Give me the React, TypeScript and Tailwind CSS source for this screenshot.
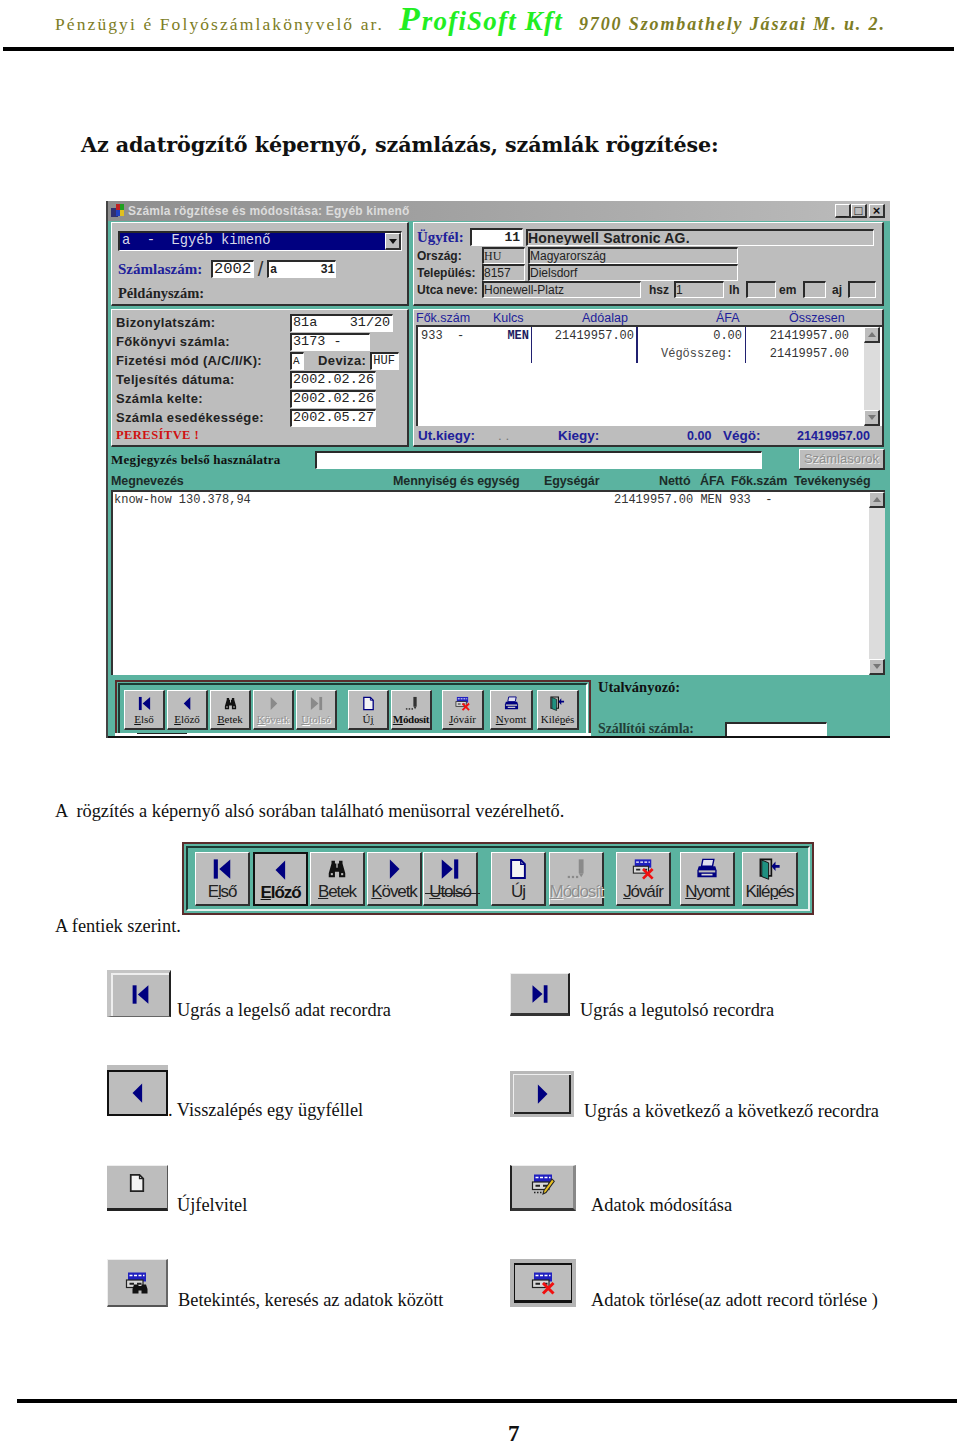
import React from 'react';

const serif = "font-['Liberation_Serif',serif]";
const sans = "font-['Liberation_Sans',sans-serif]";
const mono = "font-['Liberation_Mono',monospace]";

const raised = 'border-t border-l border-t-white border-l-white border-b-2 border-r-2 border-b-[#303030] border-r-[#303030]';
const sunken = 'border-t-2 border-l-2 border-t-[#2a2a2a] border-l-[#2a2a2a] border-b border-r border-b-white border-r-white';

/* ---- icons ---- */
const IconFirst = ({ className = '', color = '#000080' }: { className?: string; color?: string }) => (
  <svg viewBox="0 0 16 16" className={className}>
    <rect x="2" y="1" width="3" height="14" fill={color} />
    <path d="M14 1v14L6 8z" fill={color} />
  </svg>
);
const IconLast = ({ className = '', color = '#000080' }: { className?: string; color?: string }) => (
  <svg viewBox="0 0 16 16" className={className}>
    <path d="M2 1v14l8-7z" fill={color} />
    <rect x="11" y="1" width="3" height="14" fill={color} />
  </svg>
);
const IconPrev = ({ className = '', color = '#000080' }: { className?: string; color?: string }) => (
  <svg viewBox="0 0 16 16" className={className}>
    <path d="M11 1v14L4 8z" fill={color} />
  </svg>
);
const IconNext = ({ className = '', color = '#000080' }: { className?: string; color?: string }) => (
  <svg viewBox="0 0 16 16" className={className}>
    <path d="M5 1v14l7-7z" fill={color} />
  </svg>
);
const IconPage = ({ className = '', color = '#000080' }: { className?: string; color?: string }) => (
  <svg viewBox="0 0 16 16" className={className}>
    <path d="M3 1.5h7l3 3v10H3z" fill="#f4f4f4" stroke={color} strokeWidth="1.4" />
    <path d="M10 1.5v3h3" fill="none" stroke={color} strokeWidth="1" />
  </svg>
);
const IconBinoculars = ({ className = '' }: { className?: string }) => (
  <svg viewBox="0 0 16 16" className={className}>
    <path d="M4 2h2.500v2h1v3h1V4h1V2H12v2l2 7v3H9.500v-4h-3v4H2v-3l2-7z" fill="#111" />
    <rect x="3.500" y="11" width="1.500" height="1.500" fill="#bdbdbd" />
    <rect x="11" y="11" width="1.500" height="1.500" fill="#bdbdbd" />
  </svg>
);
const IconModify = ({ className = '', color = '#444' }: { className?: string; color?: string }) => (
  <svg viewBox="0 0 16 16" className={className}>
    <rect x="10" y="1" width="3.500" height="10" fill={color} />
    <path d="M10 11h3.500l-1.700 3z" fill={color} />
    <rect x="2" y="13" width="1.600" height="1.600" fill={color} />
    <rect x="5" y="13" width="1.600" height="1.600" fill={color} />
    <rect x="8" y="13" width="1.600" height="1.600" fill={color} />
  </svg>
);
const Grid = () => (
  <>
    <rect x="2" y="1" width="12" height="6" fill="#2020c0" />
    <path d="M3 3h2M6 3h2M9 3h2M12 3h1" stroke="#fff" strokeWidth="1" />
    <rect x="1" y="6" width="11" height="5" fill="#d8d8d8" stroke="#222" strokeWidth="0.8" />
    <path d="M3 8.500h3M8 8.500h3" stroke="#222" strokeWidth="1.200" />
  </>
);
const IconGridX = ({ className = '' }: { className?: string }) => (
  <svg viewBox="0 0 16 16" className={className}>
    <Grid />
    <path d="M8 8l7 7M15 8l-7 7" stroke="#f01010" strokeWidth="2" />
  </svg>
);
const IconGridPen = ({ className = '' }: { className?: string }) => (
  <svg viewBox="0 0 16 16" className={className}>
    <Grid />
    <path d="M14 4l1.500 1.500L10 13l-2 1 .6-2.300z" fill="#e8c020" stroke="#222" strokeWidth="0.7" />
    <path d="M2 13h1M4 13h1M6 13h1" stroke="#222" strokeWidth="0.9" />
  </svg>
);
const IconGridFind = ({ className = '' }: { className?: string }) => (
  <svg viewBox="0 0 16 16" className={className}>
    <Grid />
    <path d="M6 9h3v1h2V9h3l1 3v3h-4v-2H9v2H5v-3z" fill="#111" />
  </svg>
);
const IconPrint = ({ className = '' }: { className?: string }) => (
  <svg viewBox="0 0 16 16" className={className}>
    <path d="M5 1h8l-1 5H4z" fill="#e0e0f0" stroke="#000080" strokeWidth="1" />
    <path d="M2 6h12l1 3v5H1V9z" fill="#000080" />
    <rect x="2" y="9" width="12" height="1.500" fill="#bdbdbd" />
    <rect x="4" y="11.500" width="8" height="1.200" fill="#d8d8d8" />
  </svg>
);
const IconExit = ({ className = '' }: { className?: string }) => (
  <svg viewBox="0 0 16 16" className={className}>
    <path d="M1 1h8v12H1z" fill="none" stroke="#111" strokeWidth="1.200" />
    <path d="M2 1.500l5 2v12l-5-2z" fill="#1f9080" stroke="#111" strokeWidth="0.7" />
    <path d="M15 5H12V2.500L9 6l3 3.500V7h3z" fill="#000080" />
  </svg>
);

/* ---- main toolbar ---- */
type Tool = { icon: React.ReactNode; label: string; hot: number; off?: boolean; active?: boolean };

const Label = ({ text, hot }: { text: string; hot: number }) => (
  <>
    {text.slice(0, hot)}
    <span className="underline">{text[hot]}</span>
    {text.slice(hot + 1)}
  </>
);

const tools = (big: boolean): Tool[] => {
  const s = big ? 'w-[22px] h-[22px]' : 'w-[15px] h-[15px]';
  return [
    { icon: <IconFirst className={s} />, label: 'Első', hot: big ? 1 : 0 },
    { icon: <IconPrev className={s} />, label: 'Előző', hot: 0, active: big },
    { icon: <IconBinoculars className={s} />, label: 'Betek', hot: 0 },
    { icon: <IconNext className={s} color={big ? '#000080' : '#8a8a8a'} />, label: 'Követk', hot: 0, off: true },
    { icon: <IconLast className={s} color={big ? '#000080' : '#8a8a8a'} />, label: 'Utolsó', hot: 0, off: true },
    { icon: <IconPage className={s} />, label: 'Új', hot: 1 },
    { icon: <IconModify className={s} color={big ? '#8a8a8a' : '#333'} />, label: 'Módosít', hot: 0, off: big },
    { icon: <IconGridX className={s} />, label: 'Jóváír', hot: 0 },
    { icon: <IconPrint className={s} />, label: 'Nyomt', hot: 0 },
    { icon: <IconExit className={s} />, label: 'Kilépés', hot: 4 },
  ];
};

const smallExtra: Record<string, string> = {
  'Új': 'w-[41px] ml-[9px]',
  'Jóváír': 'w-[42px] ml-[8px]',
  Nyomt: 'w-[43px] ml-[4px]',
  'Kilépés': 'w-[42px] ml-[2px]',
};

const SmallButtons = () => (
  <div className="flex">
    {tools(false).map((t) => (
      <div
        key={t.label}
        className={`h-[40px] mr-[2px] bg-[#bdbdbd] flex flex-col items-center pt-[5px] ${raised} ${smallExtra[t.label] ?? 'w-[41px]'}`}
      >
        {t.icon}
        <span className={`${serif} text-[11px] leading-[13px] mt-[2px] whitespace-nowrap ${t.off ? 'text-[#909090] [text-shadow:1px_1px_0_#fff]' : 'text-[#111]'} ${t.label === 'Módosít' ? 'text-[9.500px] font-bold tracking-[-0.3px]' : ''}`}>
          <Label text={t.label} hot={t.hot} />
        </span>
      </div>
    ))}
  </div>
);

const bigGaps: Record<string, string> = {
  'Első': 'mr-[3px]',
  'Előző': 'mr-[2px]',
  Betek: 'mr-[2px]',
  'Követk': 'mr-[1px]',
  Utolsó: 'mr-[13px]',
  'Új': 'mr-[3px]',
  'Módosít': 'mr-[12px]',
  'Jóváír': 'mr-[9px]',
  Nyomt: 'mr-[7px]',
};

const BigToolbar = () => (
  <div className="w-[632px] h-[73px] bg-[#5bb3a0] border-2 border-[#5a2c2c] p-[2px]">
    <div className="w-full h-full border-2 border-t-[#1c3a33] border-l-[#1c3a33] border-r-[#e6f2ef] border-b-[#e6f2ef] flex items-center pl-[7px] relative">
      {tools(true).map((t) => (
        <div
          key={t.label}
          className={`${t.label === 'Kilépés' ? 'w-[56px]' : 'w-[55px]'} h-[54px] bg-[#bdbdbd] flex flex-col items-center pt-[5px] ${t.active ? 'border-2 border-[#111]' : raised} ${bigGaps[t.label] ?? ''}`}
        >
          {t.icon}
          <span className={`${sans} text-[17px] leading-[20px] tracking-[-1.1px] mt-[2px] whitespace-nowrap ${t.active ? 'font-bold text-[#111]' : t.label === 'Módosít' ? 'text-[#8f8f8f] [text-shadow:1px_1px_0_#eee]' : 'text-[#222]'}`}>
            <Label text={t.label} hot={t.hot} />
          </span>
        </div>
      ))}
      {/* the stray line through Követk / Utolsó */}
      <div className="absolute left-[237px] top-[45px] w-[55px] h-px bg-[#222]" />
    </div>
  </div>
);

/* ---- window bits ---- */
const Field = ({ children, className = '' }: { children?: React.ReactNode; className?: string }) => (
  <div className={`${sunken} h-[18px] bg-white flex items-center overflow-hidden whitespace-pre ${mono} text-[13.500px] leading-none text-[#222] px-[1px] ${className}`}>
    {children}
  </div>
);
const GrayField = ({ children, className = '' }: { children?: React.ReactNode; className?: string }) => (
  <div className={`${sunken} h-[17px] bg-[#bdbdbd] flex items-center overflow-hidden whitespace-pre ${sans} text-[12px] leading-none text-[#222] ${className}`}>
    {children}
  </div>
);
const ScrollBtn = ({ up }: { up?: boolean }) => (
  <div className={`w-[16px] h-[16px] bg-[#bdbdbd] flex items-center justify-center ${raised}`}>
    <svg viewBox="0 0 8 5" className="w-[8px] h-[5px]">
      <path d={up ? 'M4 0l4 5H0z' : 'M0 0h8L4 5z'} fill="#777" />
    </svg>
  </div>
);
const Scrollbar = ({ className = '' }: { className?: string }) => (
  <div className={`w-[16px] flex flex-col justify-between bg-[#dcdcdc] ${className}`}>
    <ScrollBtn up />
    <ScrollBtn />
  </div>
);

const leftRows: [string, React.ReactNode][] = [
  ['Bizonylatszám:', <Field className="w-[103px]">{'81a    31/20'}</Field>],
  ['Főkönyvi számla:', <Field className="w-[80px]">{'3173 -'}</Field>],
  [
    'Fizetési mód (A/C/I/K):',
    <div className="flex items-center">
      <Field className="w-[14px] !text-[11px]">A</Field>
      <span className={`${sans} font-bold text-[13px] text-[#222] ml-[14px] mr-[4px] tracking-[0.4px]`}>Deviza:</span>
      <Field className="w-[29px] !text-[12px]">HUF</Field>
    </div>,
  ],
  ['Teljesítés dátuma:', <Field className="w-[86px]">2002.02.26</Field>],
  ['Számla kelte:', <Field className="w-[86px]">2002.02.26</Field>],
  ['Számla esedékessége:', <Field className="w-[86px]">2002.05.27</Field>],
];

const Window = () => (
  <div className="w-[784px] h-[537px] ml-[106px] bg-[#5bb3a0] border-l-2 border-[#444] flex flex-col relative overflow-hidden">
    {/* title bar */}
    <div className="h-[20px] shrink-0 bg-gradient-to-r from-[#8e8e8e] to-[#bcbcbc] flex items-center pl-[2px] pr-[5px]">
      <svg viewBox="0 0 16 16" className="w-[16px] h-[16px] shrink-0">
        <rect x="1" y="5" width="7" height="9" fill="#303070" />
        <rect x="6" y="1" width="4" height="6" fill="#c02020" />
        <rect x="10" y="1" width="4" height="6" fill="#20a020" />
        <rect x="6" y="7" width="4" height="6" fill="#2040c0" />
        <rect x="10" y="7" width="4" height="6" fill="#e0c020" />
      </svg>
      <span className={`${sans} font-bold text-[12px] text-[#dcdcdc] ml-[2px] tracking-[0.2px]`}>Számla rögzítése és módosítása: Egyéb kimenő</span>
      <div className="ml-auto flex">
        {['_', '□', '×'].map((c) => (
          <div key={c} className={`w-[16px] h-[14px] bg-[#bdbdbd] flex items-center justify-center ${sans} text-[13px] leading-none font-bold text-[#111] ${raised} ${c === '□' ? 'mr-[2px]' : ''}`}>
            {c}
          </div>
        ))}
      </div>
    </div>

    <div className="pl-[3px] pr-[3px] pt-[1px] grid grid-cols-[298px_471px] gap-x-[4px] gap-y-[3px]">
      {/* top left */}
      <div className={`h-[84px] bg-[#bdbdbd] ${raised} pl-[6px] pt-[8px]`}>
        <div className={`w-[284px] h-[20px] ${sunken} bg-[#000080] flex items-center justify-between`}>
          <span className={`${mono} text-[13.750px] text-[#d8d8e8] whitespace-pre pl-[2px]`}>{'a  -  Egyéb kimenő'}</span>
          <div className={`w-[16px] h-[17px] bg-[#bdbdbd] flex items-center justify-center ${raised}`}>
            <svg viewBox="0 0 8 5" className="w-[8px] h-[5px]"><path d="M0 0h8L4 5z" fill="#111" /></svg>
          </div>
        </div>
        <div className="flex items-center mt-[9px] h-[18px]">
          <span className={`${serif} font-bold text-[15px] text-[#20209a] w-[93px] whitespace-nowrap`}>Számlaszám:</span>
          <Field className="w-[43px] !text-[15.500px]">2002</Field>
          <span className={`${sans} text-[20px] leading-none font-light text-[#333] w-[13px] text-center`}>/</span>
          <Field className="w-[69px] !text-[12px] font-bold">{'a      31'}</Field>
        </div>
        <div className={`${serif} font-bold text-[14.500px] leading-[18px] text-[#222] mt-[6px]`}>Példányszám:</div>
      </div>

      {/* top right */}
      <div className={`h-[84px] bg-[#bdbdbd] ${raised} pl-[3px] pt-[5px]`}>
        <div className="flex items-center h-[18px]">
          <span className={`${serif} font-bold text-[15px] text-[#20209a] w-[53px]`}>Ügyfél:</span>
          <Field className={`w-[53px] justify-end ${mono} font-bold !text-[13px] pr-[2px]`}>11</Field>
          <GrayField className="w-[348px] ml-[3px] !text-[14px] font-bold tracking-[0.2px]">Honeywell Satronic AG.</GrayField>
        </div>
        <div className="flex items-center h-[17px] mt-[1px]">
          <span className={`${sans} font-bold text-[12px] text-[#222] w-[65px]`}>Ország:</span>
          <GrayField className={`w-[43px] !text-[12px] ${serif}`}>HU</GrayField>
          <GrayField className="w-[210px] ml-[3px]">Magyarország</GrayField>
        </div>
        <div className="flex items-center h-[17px]">
          <span className={`${sans} font-bold text-[12px] text-[#222] w-[65px]`}>Település:</span>
          <GrayField className={`w-[43px] ${mono}`}>8157</GrayField>
          <GrayField className="w-[210px] ml-[3px]">Dielsdorf</GrayField>
        </div>
        <div className={`flex items-center h-[17px] ${sans} font-bold text-[12px] text-[#222]`}>
          <span className="w-[65px]">Utca neve:</span>
          <GrayField className="w-[159px] font-normal">Honewell-Platz</GrayField>
          <span className="ml-[8px] w-[25px]">hsz</span>
          <GrayField className="w-[50px] font-normal">1</GrayField>
          <span className="ml-[5px] w-[17px]">lh</span>
          <GrayField className="w-[30px]" />
          <span className="ml-[3px] w-[24px]">em</span>
          <GrayField className="w-[23px]" />
          <span className="ml-[6px] w-[16px]">aj</span>
          <GrayField className="w-[28px]" />
        </div>
      </div>

      {/* middle left */}
      <div className={`h-[138px] bg-[#bdbdbd] ${raised} pl-[4px] pt-[3px]`}>
        {leftRows.map(([label, field]) => (
          <div key={label} className="flex items-center h-[19px]">
            <span className={`${sans} font-bold text-[13px] tracking-[0.35px] text-[#222] w-[174px] shrink-0 whitespace-nowrap`}>{label}</span>
            {field}
          </div>
        ))}
        <div className={`${serif} font-bold text-[12.500px] leading-[16px] tracking-[0.45px] text-[#d01010]`}>PERESÍTVE !</div>
      </div>

      {/* middle right */}
      <div className={`h-[138px] bg-[#bdbdbd] ${raised} flex flex-col`}>
        <div className={`h-[15px] grid grid-cols-[77px_89px_134px_73px_1fr] pl-[2px] ${sans} text-[12.500px] leading-[17px] text-[#20209a]`}>
          <span>Fők.szám</span>
          <span>Kulcs</span>
          <span>Adóalap</span>
          <span>ÁFA</span>
          <span>Összesen</span>
        </div>
        <div className={`h-[101px] ml-[2px] bg-white border-t-2 border-l-2 border-[#333] flex ${mono} text-[12px] leading-[18px] text-[#333]`}>
          <div className="h-[36px] w-[114px] border-r border-[#202070] flex justify-between whitespace-pre pl-[3px] pr-[2px]">
            <span>933  -</span>
            <span className="text-[#202060] font-bold">MEN</span>
          </div>
          <div className="h-[36px] w-[106px] border-r-2 border-[#202070] text-right pr-[2px]">21419957.00</div>
          <div className="h-[36px] w-[108px] border-r border-[#202070] text-right pr-[3px]">
            <div>0.00</div>
            <div className="pr-[9px] text-[#444]">Végösszeg:</div>
          </div>
          <div className="h-[36px] w-[103px] text-right">
            <div>21419957.00</div>
            <div>21419957.00</div>
          </div>
          <div className="ml-auto w-[20px] flex justify-center">
            <Scrollbar className="h-[99px]" />
          </div>
        </div>
        <div className={`flex-1 flex items-center ${sans} font-bold text-[13.500px] text-[#20209a] pl-[4px]`}>
          <span className="w-[80px]">Ut.kiegy:</span>
          <span className="w-[60px] text-[#777] font-normal">. .</span>
          <span className="w-[129px]">Kiegy:</span>
          <span className="w-[36px] text-[12.500px]">0.00</span>
          <span className="w-[74px]">Végö:</span>
          <span className="text-[12.500px]">21419957.00</span>
        </div>
      </div>
    </div>

    {/* note row */}
    <div className="h-[25px] shrink-0 flex items-center pl-[3px] pr-[3px]">
      <span className={`${serif} font-bold text-[13px] tracking-[0.2px] text-[#111] w-[204px] whitespace-nowrap`}>Megjegyzés belső használatra</span>
      <div className={`w-[447px] h-[18px] bg-white ${sunken}`} />
      <div className={`ml-[37px] w-[86px] h-[21px] bg-[#bdbdbd] flex items-center justify-center ${raised} ${sans} text-[13px] text-[#8f8f8f] [text-shadow:1px_1px_0_#eee]`}>Számlasorok</div>
    </div>

    {/* list header */}
    <div className={`h-[18px] shrink-0 grid grid-cols-[282px_151px_115px_41px_31px_63px_1fr] pl-[3px] ${sans} font-bold text-[12.500px] leading-[18px] tracking-[-0.1px] text-[#1c2c28] whitespace-nowrap`}>
      <span>Megnevezés</span>
      <span>Mennyiség és egység</span>
      <span>Egységár</span>
      <span>Nettó</span>
      <span>ÁFA</span>
      <span>Fők.szám</span>
      <span>Tevékenység</span>
    </div>

    {/* list */}
    <div className={`h-[185px] shrink-0 ml-[3px] mr-[5px] bg-white border-t-2 border-l-2 border-[#333] flex ${mono} text-[12px] leading-[16px] text-[#333]`}>
      <span className="w-[501px] pl-[1px] whitespace-pre">know-how 130.378,94</span>
      <span className="whitespace-pre">{'21419957.00 MEN 933  -'}</span>
      <div className="ml-auto flex"><Scrollbar className="h-[183px]" /></div>
    </div>

    {/* bottom strip */}
    <div className="flex pt-[5px] pl-[7px]">
      <div className="w-[476px] h-[60px] border-2 border-[#5a2c2c] border-b-0 p-[1px]">
        <div className="h-[59px] border-2 border-[#1c3a33] border-b-0 border-r-white pl-[4px] pt-[5px]">
          <SmallButtons />
        </div>
      </div>
      <div className="ml-[7px] -mt-[2px] flex flex-col">
        <span className={`${serif} font-bold text-[14.500px] leading-[18px] text-[#111]`}>Utalványozó:</span>
        <div className="flex items-end mt-[15px]">
          <span className={`${serif} font-bold text-[14px] leading-[18px] pt-[9px] text-[#224038] w-[127px] tracking-[-0.1px] whitespace-nowrap`}>Szállítói számla:</span>
          <div className={`w-[102px] h-[16px] bg-white ${sunken} border-b-0`} />
        </div>
      </div>
    </div>
    {/* cropped edge of the screenshot */}
    <div className="absolute left-[7px] bottom-[2px] w-[476px] h-[3px] bg-white" />
    <div className="absolute left-[29px] bottom-[4px] w-[50px] h-px bg-[#222]" />
    <div className="absolute left-0 right-0 bottom-0 h-[2px] bg-[#111]" />
  </div>
);

/* ---- legend ---- */
type Legend = { icon: React.ReactNode; box: string; text: React.ReactNode; txt: string };

const legend: Legend[] = [
  {
    icon: <IconFirst className="w-[21px] h-[21px]" />,
    box: 'w-[64px] h-[47px] border-t-[3px] border-l-[4px] border-t-[#c4c4c4] border-l-[#c4c4c4] border-r-2 border-b border-r-[#222] border-b-[#666] shadow-[inset_2px_2px_0_#eee]',
    text: 'Ugrás a legelső adat recordra',
    txt: 'ml-[6px] mb-[-5px]',
  },
  {
    icon: <IconLast className="w-[20px] h-[20px]" />,
    box: 'w-[60px] h-[43px] mt-[3px] border-r-2 border-b-[3px] border-r-[#222] border-b-[#333] border-t border-l border-t-[#eee] border-l-[#eee]',
    text: 'Ugrás a legutolsó recordra',
    txt: 'ml-[10px] mb-[-6px]',
  },
  {
    icon: <IconPrev className="w-[22px] h-[22px]" />,
    box: 'w-[61px] h-[51px] border-t-[5px] border-t-[#bdbdbd] shadow-[inset_0_0_0_2px_#111]',
    text: '. Visszalépés egy ügyféllel',
    txt: 'ml-[0px] mb-[-6px]',
  },
  {
    icon: <IconNext className="w-[22px] h-[22px]" />,
    box: 'w-[64px] h-[46px] mt-[6px] border-[3px] border-[#b8b8b8] shadow-[inset_1px_1px_0_#eee,inset_-2px_-2px_0_#222]',
    text: 'Ugrás a következő a következő recordra',
    txt: 'ml-[10px] mb-[-6px]',
  },
  {
    icon: <IconPage color="#222" className="w-[20px] h-[20px] mb-[8px]" />,
    box: 'w-[61px] h-[46px] border-t border-t-[#eee] border-r border-r-[#555] border-b-[3px] border-b-[#222]',
    text: 'Újfelvitel',
    txt: 'ml-[9px] mb-[-6px]',
  },
  {
    icon: <IconGridPen className="w-[24px] h-[24px] mb-[4px]" />,
    box: 'w-[66px] h-[46px] border-l-2 border-l-[#222] border-t border-t-[#eee] border-r-[3px] border-r-[#888] border-b-[3px] border-b-[#333]',
    text: 'Adatok módosítása',
    txt: 'ml-[15px] mb-[-6px]',
  },
  {
    icon: <IconGridFind className="w-[24px] h-[24px]" />,
    box: 'w-[61px] h-[48px] border-t border-l border-t-[#eee] border-l-[#eee] border-r-2 border-b-2 border-r-[#666] border-b-[#555]',
    text: 'Betekintés, keresés az adatok között',
    txt: 'ml-[10px] mb-[-5px]',
  },
  {
    icon: <IconGridX className="w-[24px] h-[24px]" />,
    box: 'w-[66px] h-[48px] border-[4px] border-[#b4b4b4] shadow-[inset_1px_2px_0_#111,inset_-1px_-3px_0_#111]',
    text: 'Adatok törlése(az adott record törlése )',
    txt: 'ml-[15px] mb-[-5px]',
  },
];

const rowHeights = ['h-[95px]', 'h-[100px]', 'h-[94px]', 'h-[108px]'];

const App = () => (
  <div className={`w-[960px] h-[1444px] bg-white overflow-hidden ${serif}`}>
    {/* letterhead */}
    <div className="h-[47px] flex items-end pl-[55px] pb-[8px] whitespace-nowrap">
      <span className="text-[17.500px] leading-[30px] tracking-[2.1px] text-[#7d7d25]">Pénzügyi é Folyószámlakönyvelő ar.</span>
      <span className="ml-[15px] font-bold italic text-[#22ee22] text-[27px] leading-[36px] tracking-[1.2px]">
        <span className="text-[34px] leading-[30px] tracking-[2px]">P</span>rofiSoft Kft
      </span>
      <span className="ml-[16px] font-bold italic text-[18px] leading-[30px] tracking-[1.87px] text-[#7d7d25]">9700 Szombathely Jászai M. u. 2.</span>
    </div>
    <div className="ml-[3px] w-[951px] h-[4px] bg-black" />

    <h1 className="ml-[81px] mt-[81px] font-['DejaVu_Serif',serif] font-bold text-[20.700px] leading-[26px] text-[#111] whitespace-nowrap tracking-[-0.1px]">
      Az adatrögzítő képernyő, számlázás, számlák rögzítése:
    </h1>

    <div className="mt-[43px]">
      <Window />
    </div>

    <p className="ml-[55px] mt-[61px] text-[18.350px] leading-[24px] text-[#111] whitespace-pre">A  rögzítés a képernyő alsó sorában található menüsorral vezérelhető.</p>

    <div className="mt-[19px] ml-[55px] flex items-end">
      <span className="text-[18.350px] leading-[24px] text-[#111] whitespace-nowrap w-[127px] mb-[-23px]">A fentiek szerint.</span>
      <BigToolbar />
    </div>

    {/* legend */}
    <div className="mt-[55px] ml-[107px] grid grid-cols-[403px_1fr]">
      {legend.map((item, i) => (
        <div key={i} className={`flex items-end ${rowHeights[Math.floor(i / 2)]} self-start`}>
          <div className="flex items-end self-start">
            <div className={`bg-[#bdbdbd] flex justify-center items-center shrink-0 ${item.box}`}>{item.icon}</div>
            <span className={`text-[18.350px] leading-[24px] text-[#111] whitespace-nowrap ${item.txt}`}>{item.text}</span>
          </div>
        </div>
      ))}
    </div>

    <div className="mt-[32px] ml-[17px] w-[940px] h-[4px] bg-black" />
    <div className="mt-[21px] ml-[508px] text-[23px] leading-[20px] font-bold text-[#111]">7</div>
  </div>
);

export default App;
